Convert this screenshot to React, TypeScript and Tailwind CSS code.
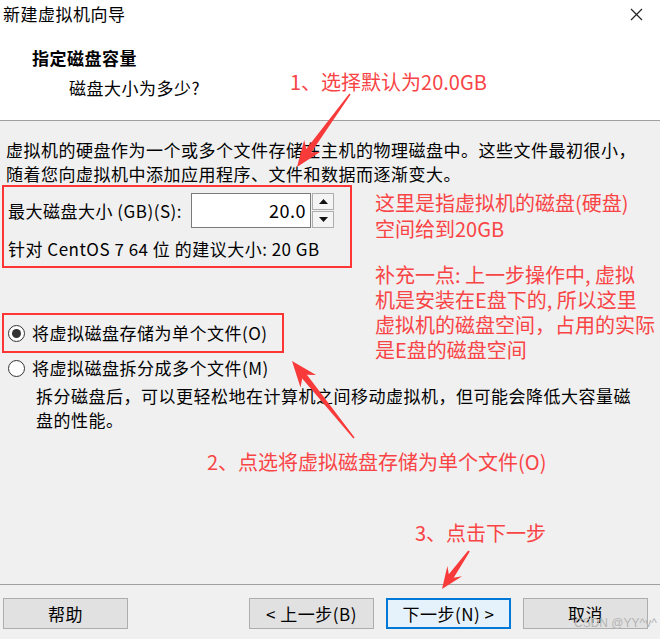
import React from "react";

// red marks drawn on top of the dialog screenshot
function arrowPoints(
  x1: number,
  y1: number,
  x2: number,
  y2: number,
  head = 26,
  headW = 20,
  shaftW = 6,
  tailW = 1.5
) {
  const dx = x2 - x1;
  const dy = y2 - y1;
  const len = Math.hypot(dx, dy);
  const ux = dx / len;
  const uy = dy / len;
  const nx = -uy;
  const ny = ux;
  const bx = x2 - ux * head;
  const by = y2 - uy * head;
  const sx = x2 - ux * (head - 6);
  const sy = y2 - uy * (head - 6);
  const pts = [
    [x1 + (nx * tailW) / 2, y1 + (ny * tailW) / 2],
    [sx + (nx * shaftW) / 2, sy + (ny * shaftW) / 2],
    [bx + (nx * headW) / 2, by + (ny * headW) / 2],
    [x2, y2],
    [bx - (nx * headW) / 2, by - (ny * headW) / 2],
    [sx - (nx * shaftW) / 2, sy - (ny * shaftW) / 2],
    [x1 - (nx * tailW) / 2, y1 - (ny * tailW) / 2],
  ];
  return pts.map((p) => p.map((v) => v.toFixed(1)).join(",")).join(" ");
}

function Radio({ checked }: { checked?: boolean }) {
  return (
    <span className="flex h-[17px] w-[17px] shrink-0 items-center justify-center rounded-full border border-[#333] bg-white">
      {checked && <span className="h-[9px] w-[9px] rounded-full bg-[#333]" />}
    </span>
  );
}

function WinButton({
  label,
  primary,
}: {
  label: string;
  primary?: boolean;
}) {
  return (
    <button
      className={
        primary
          ? "flex h-[31px] w-[125px] items-center justify-center border-2 border-[#0078d7] bg-[#e5f1fb] text-[17px] leading-none"
          : "flex h-[31px] w-[125px] items-center justify-center border border-[#adadad] bg-[#e1e1e1] text-[17px] leading-none"
      }
    >
      {label}
    </button>
  );
}

export default function App() {
  return (
    <div className="relative flex h-[639px] w-[660px] flex-col overflow-hidden bg-[#f0f0f0] font-['Noto_Sans_CJK_SC','Noto_Sans',sans-serif] text-[17px] tracking-[0.5px] text-black">
      <div className="h-[121px] border-b border-[#a0a0a0] bg-white">
        <div className="flex h-[28px] items-center justify-between pl-[3px] pr-[17px]">
          <span>新建虚拟机向导</span>
          <svg width="13" height="13" viewBox="0 0 13 13">
            <path d="M1 1 L12 12 M12 1 L1 12" stroke="#222" strokeWidth="1.2" />
          </svg>
        </div>
        <div className="mt-[18px] pl-[32px] font-bold leading-[24px]">
          指定磁盘容量
        </div>
        <div className="mt-[6px] pl-[69px] leading-[24px]">磁盘大小为多少?</div>
      </div>

      <div className="flex-1 pl-[6px] pt-[17px]">
        <p className="whitespace-nowrap leading-[24px]">
          虚拟机的硬盘作为一个或多个文件存储在主机的物理磁盘中。这些文件最初很小，
          <br />
          随着您向虚拟机中添加应用程序、文件和数据而逐渐变大。
        </p>

        <div className="mt-[7px] flex h-[35px] items-center pl-[2px]">
          <span className="w-[183px] whitespace-nowrap">最大磁盘大小 (GB)(S):</span>
          <div className="flex h-[35px] w-[120px] items-center justify-end border border-[#7a7a7a] bg-white pr-[4px] text-[18px]">
            20.0
          </div>
          <div className="ml-[1px] flex h-[35px] w-[22px] flex-col gap-[1px]">
            <div className="flex flex-1 items-center justify-center border border-[#adadad] bg-[#f4f4f4]">
              <svg width="9" height="5" viewBox="0 0 9 5">
                <path d="M4.5 0 L9 5 L0 5 Z" fill="#111" />
              </svg>
            </div>
            <div className="flex flex-1 items-center justify-center border border-[#adadad] bg-[#f4f4f4]">
              <svg width="9" height="5" viewBox="0 0 9 5">
                <path d="M0 0 L9 0 L4.5 5 Z" fill="#111" />
              </svg>
            </div>
          </div>
        </div>

        <p className="mt-[9px] pl-[2px] leading-[24px]">
          针对 CentOS 7 64 位 的建议大小: 20 GB
        </p>

        <div className="mt-[60px] flex items-center gap-[7px] pl-[2px] leading-[24px]">
          <Radio checked />
          <span>将虚拟磁盘存储为单个文件(O)</span>
        </div>
        <div className="mt-[11px] flex items-center gap-[7px] pl-[2px] leading-[24px]">
          <Radio />
          <span>将虚拟磁盘拆分成多个文件(M)</span>
        </div>
        <p className="mt-[4px] whitespace-nowrap pl-[30px] leading-[24px]">
          拆分磁盘后，可以更轻松地在计算机之间移动虚拟机，但可能会降低大容量磁
          <br />
          盘的性能。
        </p>
      </div>

      <div className="flex h-[55px] justify-between border-t border-[#a0a0a0] pl-[3px] pr-[12px] pt-[13px]">
        <WinButton label="帮助" />
        <div className="flex gap-[12px]">
          <WinButton label="< 上一步(B)" />
          <WinButton label="下一步(N) >" primary />
          <WinButton label="取消" />
        </div>
      </div>

      {/* annotations */}
      <div className="pointer-events-none absolute inset-0 text-[20px] tracking-normal text-[#f94446]">
        <div className="absolute left-[290px] top-[69px] leading-[26px]">
          1、选择默认为20.0GB
        </div>
        <div className="absolute left-[375px] top-[190px] leading-[26px]">
          这里是指虚拟机的磁盘(硬盘)
          <br />
          空间给到20GB
        </div>
        <div className="absolute left-[375px] top-[262px] whitespace-nowrap leading-[25px]">
          补充一点: 上一步操作中, 虚拟
          <br />
          机是安装在E盘下的, 所以这里
          <br />
          虚拟机的磁盘空间，占用的实际
          <br />
          是E盘的磁盘空间
        </div>
        <div className="absolute left-[207px] top-[449px] whitespace-nowrap leading-[26px]">
          2、点选将虚拟磁盘存储为单个文件(O)
        </div>
        <div className="absolute left-[415px] top-[520px] leading-[26px]">
          3、点击下一步
        </div>

        <div className="absolute left-[2px] top-[185px] h-[83px] w-[350px] border-2 border-[#ff3535]" />
        <div className="absolute left-[2px] top-[313px] h-[40px] w-[282px] border-2 border-[#ff3535]" />

        <svg className="absolute left-0 top-0" width="660" height="639">
          <polygon points={arrowPoints(350, 94, 297, 167, 26, 20, 6, 1.5)} fill="#f83a3a" />
          <polygon points={arrowPoints(354, 438, 292, 361, 26, 20, 6, 1.5)} fill="#f83a3a" />
          <polygon points={arrowPoints(469, 551, 442, 589, 22, 18, 6, 2)} fill="#f83a3a" />
        </svg>

        <div className="absolute left-[574px] top-[615px] whitespace-nowrap font-['Liberation_Sans',sans-serif] text-[12px] leading-[16px] text-[#b4b4b4]">
          CSDN @YY^v^
        </div>
      </div>
    </div>
  );
}
